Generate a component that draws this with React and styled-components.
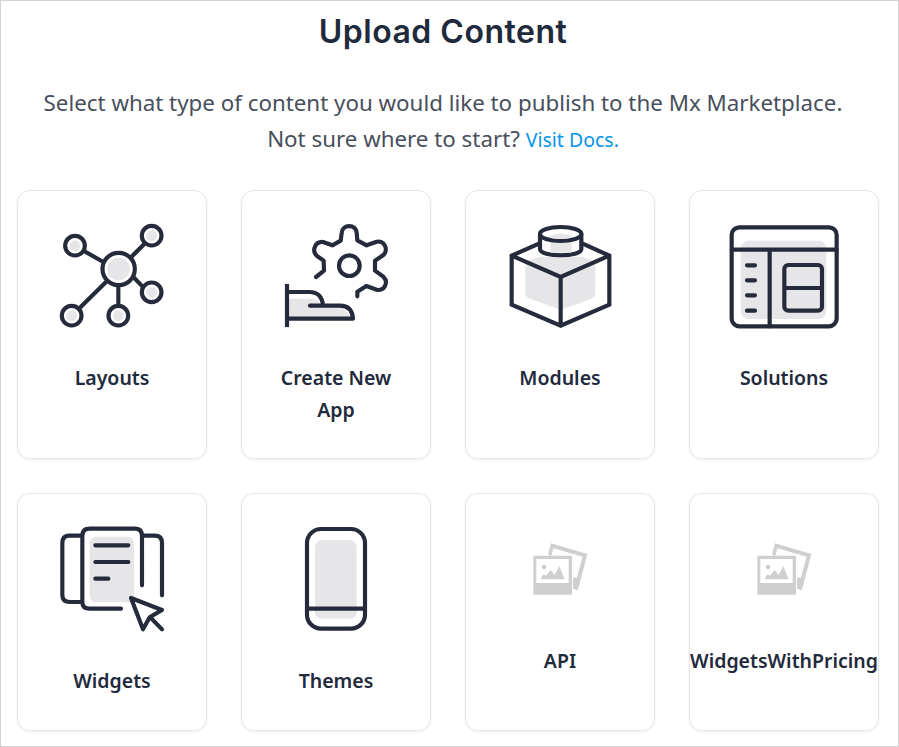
import React from "react";
import styled, { createGlobalStyle } from "styled-components";

const GlobalStyle = createGlobalStyle`
  * { box-sizing: border-box; }
  body { margin: 0; background: #fff; font-family: "Noto Sans", sans-serif; }
`;

const Page = styled.main`
  width: 899px;
  height: 747px;
  padding: 10px 19px 0 16px;
  border: 1px solid #d3d3d3;
  overflow: hidden;
  background: #fff;
`;

const Title = styled.h1`
  margin: 0;
  padding-right: 10px;
  text-align: center;
  font: 600 32px/42px Inter, sans-serif;
  letter-spacing: 0.5px;
  color: #1f2a3c;
`;

const Intro = styled.p`
  margin: 32px 0 0;
  padding-right: 10px;
  text-align: center;
  font-size: 22.34px;
  line-height: 36px;
  white-space: nowrap;
  color: #474f5c;
`;

const DocsLink = styled.a`
  font-size: 19.5px;
  color: #0595ea;
  text-decoration: none;
`;

const Grid = styled.section`
  display: grid;
  grid-template-columns: repeat(4, 190px);
  grid-template-rows: 269px 238px;
  gap: 34px;
  margin-top: 32px;
`;

const Card = styled.article`
  display: flex;
  flex-direction: column;
  align-items: center;
  padding-top: 25px;
  border: 1px solid #e7e7e8;
  border-radius: 13px;
  box-shadow: 0 1px 3px rgba(0, 0, 0, 0.08);
`;

const Icon = styled.svg`
  flex: none;
  width: 120px;
  height: ${(p) => (p.$short ? 100 : 120)}px;
  fill: none;
  stroke: #252b3a;
  stroke-width: 12.5;
  stroke-linecap: round;
  stroke-linejoin: round;
`;

const Label = styled.h2`
  max-width: ${(p) => (p.$wide ? "none" : "130px")};
  margin: 26px 0 0;
  text-align: center;
  font-size: 19.5px;
  font-weight: 600;
  line-height: 32px;
  color: #1f2a3c;
`;

const SHADE = "#e6e6e9";

const LayoutsIcon = () => (
  <Icon viewBox="126 108 360 360">
    <path d="M222 213l58 33M405 190l-42 42M212 381l76-75M325 318v58M370 291l30 31" />
    {[[195, 197], [425, 167], [425, 337], [185, 407], [325, 407]].map(([x, y]) => (
      <g key={`${x}-${y}`}>
        <circle cx={x} cy={y} r="29.5" fill="#fff" />
        <circle cx={x} cy={y} r="16" fill={SHADE} stroke="none" />
      </g>
    ))}
    <circle cx="326" cy="267" r="48.5" fill="#fff" />
    <circle cx="326" cy="267" r="34" fill={SHADE} stroke="none" />
  </Icon>
);

const CreateAppIcon = () => (
  <Icon viewBox="123 108 360 360">
    <path stroke="none" fill={SHADE} d="M162 356h62q30 2 38 22h30q42 2 55 36H162z" />
    <path d="M243 291l24-19-1-30-20-14C229 213 240 184 264 186l28 10 25-14 3-23c2-27 43-28 45-1l2 23 28 15 28-10c24-8 40 24 21 40l-24 16v30l25 18c18 17 1 46-20 39l-31-11-27 17v14" />
    <circle cx="343" cy="257" r="31" />
    <path d="M156 318v117" strokeLinecap="square" />
    <path d="M156 336h67q37 0 41 40M225 377h90q36 0 39 39H157" />
  </Icon>
);

const ModulesIcon = () => (
  <Icon viewBox="120 108 360 360">
    <path stroke="none" fill={SHADE} d="M196 245l44-15h125l41 15v98q-2 10-14 14l-90 32-90-32q-14-4-16-14z" />
    <path strokeLinejoin="miter" d="M237 191l-82 36v147l147 63 146-63V227l-80-36M155 227l147 64 146-64M302 291v146" />
    <path fill="#fff" d="M240 162v45c0 25 124 25 124 0v-45" />
    <path stroke="none" fill={SHADE} d="M271 187h64v31h-64z" />
    <ellipse cx="302" cy="162" rx="62" ry="21" fill="#fff" />
    <ellipse cx="302" cy="169" rx="32" ry="8" fill={SHADE} stroke="none" />
  </Icon>
);

const SolutionsIcon = () => (
  <Icon viewBox="117 108 360 360">
    <rect x="167" y="182" width="257" height="235" rx="24" fill={SHADE} stroke="none" />
    <rect x="140" y="142" width="315" height="297" rx="23" />
    <path d="M140 209h315M254 209v230M303 324h108M186 256h24M186 301h24M186 346h24M186 392h24" />
    <rect x="298" y="255" width="113" height="137" rx="12" />
  </Icon>
);

const WidgetsIcon = () => (
  <Icon viewBox="126 102 360 360">
    <rect x="239" y="155" width="133" height="197" rx="20" fill={SHADE} stroke="none" />
    <path d="M215 152h-36q-22 0-22 22v156q0 21 22 21h36M333 371h-94q-22 0-22-20V153q0-22 22-22h135q22 0 22 22v148M401 152h33q22 0 22 22v157M256 181h99M256 231h99M256 281h39" />
    <path fill="#fff" d="M363 339l36 94 20-36 37-22zM421 397l35 36" />
  </Icon>
);

const ThemesIcon = () => (
  <Icon viewBox="123 102 360 360">
    <rect x="240" y="165" width="125" height="236" rx="20" fill={SHADE} stroke="none" />
    <rect x="216" y="132" width="174" height="299" rx="42" />
    <path d="M218 371h170" />
  </Icon>
);

const PlaceholderIcon = () => (
  <Icon $short viewBox="0 -18 360 300">
    <path fill="#cfcfcf" stroke="none" d="M153 55l109 32-28 108-15-4V157l11 2 18-64-88-25-6 22-10-3z" />
    <path fill="#cfcfcf" stroke="none" fillRule="evenodd" d="M100 92h116v117H100zM109 102v72h97v-72z" />
    <circle cx="132" cy="126" r="7" fill="#cfcfcf" stroke="none" />
    <path fill="#cfcfcf" stroke="none" d="M122 163l8-15 8 4 14-17 12 15 14-27 16 40z" />
  </Icon>
);

const contentTypes = [
  { name: "Layouts", Art: LayoutsIcon },
  { name: "Create New App", Art: CreateAppIcon },
  { name: "Modules", Art: ModulesIcon },
  { name: "Solutions", Art: SolutionsIcon },
  { name: "Widgets", Art: WidgetsIcon },
  { name: "Themes", Art: ThemesIcon },
  { name: "API", Art: PlaceholderIcon },
  { name: "WidgetsWithPricing", Art: PlaceholderIcon, wide: true },
];

export default function App() {
  return (
    <Page>
      <GlobalStyle />
      <Title>Upload Content</Title>
      <Intro>
        Select what type of content you would like to publish to the Mx Marketplace.
        <br />
        Not sure where to start? <DocsLink href="#docs">Visit Docs.</DocsLink>
      </Intro>
      <Grid>
        {contentTypes.map(({ name, Art, wide }) => (
          <Card key={name}>
            <Art />
            <Label $wide={wide}>{name}</Label>
          </Card>
        ))}
      </Grid>
    </Page>
  );
}
